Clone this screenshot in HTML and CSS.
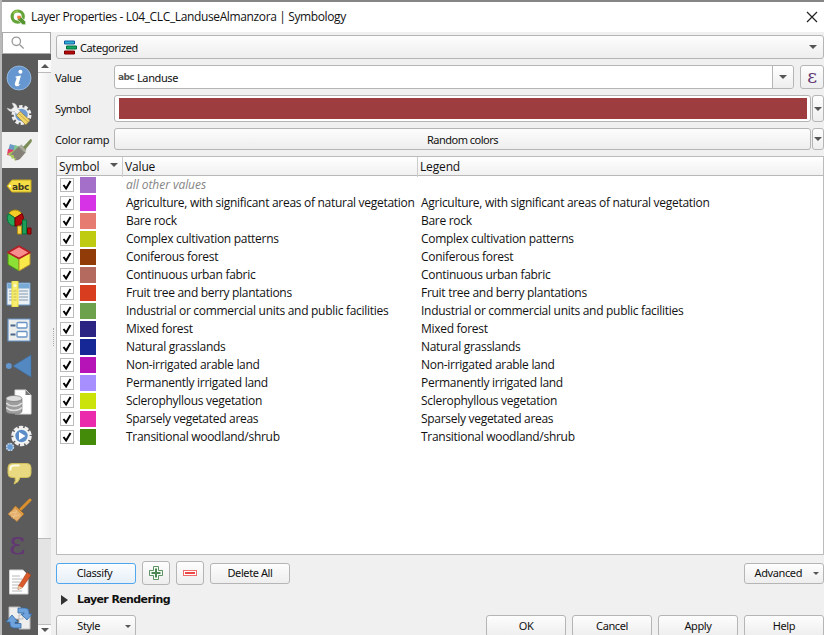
FILE: index.html
```html
<!DOCTYPE html>
<html lang="en">
<head>
<meta charset="utf-8">
<title>Layer Properties</title>
<link rel="stylesheet" href="styles.css">
</head>
<body>
<div class="window">
  <header class="titlebar">
    <svg class="logo" width="17" height="17" viewBox="0 0 17 17"><circle cx="7.7" cy="7.6" r="5.6" fill="none" stroke="#63a338" stroke-width="3.2"/><path d="M7.500 7.500h3.200l5 5.200v3h-3.200l-5-5z" fill="#55942f" stroke="#fff" stroke-width=".6"/><path d="M7.300 6.800h3.500v2l-1.600 1.700-1.900-1.600z" fill="#ee7a3c"/><path d="M3.200 4.500a5.400 5.400 0 0 1 5-2.500" fill="none" stroke="#9bc94b" stroke-width="1.500"/></svg>
    <h1>Layer Properties - L04_CLC_LanduseAlmanzora | Symbology</h1>
    <svg class="close" width="12" height="12" viewBox="0 0 12 12"><path d="M1 1l10 10M11 1L1 11" stroke="#222" stroke-width="1.200"/></svg>
  </header>
  <div class="body">
    <aside class="sidebar">
      <div class="search"><svg width="14" height="14" viewBox="0 0 14 14" fill="none" stroke="#9a9a9a" stroke-width="1.300"><circle cx="5.300" cy="5.300" r="4.200"/><path d="M8.500 8.500l4.200 4"/></svg></div>
      <div class="side-row">
        <nav class="tools">
          <span class="tool"><svg viewBox="0 0 26 26"><circle cx="13" cy="13" r="12" fill="#6697d0" stroke="#a0c3e6" stroke-width=".8"/><circle cx="14.400" cy="6.700" r="2" fill="#fff"/><path d="M9.500 11.400l5.500-.9-2.400 8.200q-.4 1.400 2.300-.3-2 3-4.400 2.800-2.400-.4-1.400-3.400l1.400-4.400q.3-1.100-1-.9z" fill="#fff"/></svg></span>
          <span class="tool"><svg viewBox="0 0 26 26"><circle cx="15.500" cy="14" r="8.500" fill="none" stroke="#ededed" stroke-width="3" stroke-dasharray="3.400 1.940"/><circle cx="15.500" cy="14" r="7" fill="#6f9bd0" stroke="#eee" stroke-width="1.500"/><path d="M6 2q5 0 5.400 5.500l5 5-3 3.200-5-5.200Q3 11.500 1 7l4 1.500 3-2.500z" fill="#f0f0f0" stroke="#bbb" stroke-width=".5"/><path d="M10.500 14.500l3.500-4 10 8.800-4.200 4.700z" fill="#f1d568" stroke="#8b773a" stroke-width=".7"/><path d="M12.500 12.500l9.500 8.500" stroke="#c9a947" stroke-width="1"/></svg></span>
          <span class="tool selected"><svg viewBox="0 0 26 26"><path d="M4 7l6.500 2-3.500 6-5-1z" fill="#6b9ac6"/><path d="M2 12l6 1-2 6-5-1z" fill="#e73866"/><path d="M9 8l8 3-5 5-5-1z" fill="#81c98d"/><path d="M1 17l8-4 3 8-3 3q-1-4-3-2-1-4-5-5z" fill="#a9c95a"/><path d="M8 14l5-5 7 6-6 7q-3 2-5 1 2-3-1-2 1-4-4-3z" fill="#858078"/><path d="M12.500 9.500l3-2 5 5-2 3z" fill="#a7a99a"/><path d="M17 10l7.500-8q2 0 1 3l-6 7.500z" fill="#7c8c57"/></svg></span>
          <span class="tool"><svg viewBox="0 0 26 26"><path d="M1 13l5-6h19v12H6z" fill="#f5dd45" stroke="#c9ab1f"/><circle cx="4" cy="13" r="1" fill="#fff"/><text x="6" y="16.600" class="tag-text">abc</text></svg></span>
          <span class="tool"><svg viewBox="0 0 26 26"><path d="M9 9L2.500 4.500A8 8 0 0 1 16 5z" fill="#f5cb28" stroke="#ab8c0a"/><path d="M9 9L2.500 4.500A8 8 0 0 0 9 17z" fill="#23aa5c" stroke="#07713a"/><path d="M9 9l7-4.500A8 8 0 0 1 9 17z" fill="#b30b0b" stroke="#710000"/><path d="M11.500 17h4v8h-4z" fill="#f8d44a" stroke="#b08b12"/><path d="M16.500 11h4v14h-4z" fill="#1e9c58" stroke="#07713a"/><path d="M21.500 19h3.500v6h-3.500z" fill="#b30b0b" stroke="#710000"/></svg></span>
          <span class="tool"><svg viewBox="0 0 26 26" stroke-linejoin="round"><path d="M2 7.500l11 6V26L2 19.500z" fill="#8bdf35" stroke="#4a9614"/><path d="M24 7.500l-11 6V26l11-6.500z" fill="#f8e849" stroke="#b9972b"/><path d="M13 1.200L24 7.500l-11 6-11-6z" fill="#f78d8d" stroke="#b71d24" stroke-width="1.600"/></svg></span>
          <span class="tool"><svg viewBox="0 0 26 26"><path d="M1 2h23v22H1z" fill="#edf1f4" stroke="#6a99c9"/><path d="M1.500 2.500h22v5h-22z" fill="#79a9d5"/><path d="M3 10h4M13 10h9M3 13h4M13 13h9M3 16h4M13 16h9M3 19h4M13 19h9" stroke="#8099ae"/><path d="M6 0h6v26H6z" fill="#f7ed70" stroke="#e9dd3e"/><circle cx="9" cy="4.500" r="1.600" fill="#fffbd0"/><path d="M7.500 10h3M7.500 13h3M7.500 16h3M7.500 19h3" stroke="#c2bb56"/></svg></span>
          <span class="tool"><svg viewBox="0 0 26 26"><path d="M2 2h22v22H2z" fill="#eceded" stroke="#6594c6" stroke-width="1.200"/><path d="M4.500 8.500h5M4.500 17.500h5" stroke="#496887" stroke-width="2"/><rect x="11" y="5.500" width="10" height="5.500" rx="1" fill="#fff" stroke="#6895c5" stroke-width="1.300"/><rect x="11" y="14.500" width="10" height="5.500" rx="1" fill="#fff" stroke="#6895c5" stroke-width="1.300"/></svg></span>
          <span class="tool"><svg viewBox="0 0 26 26"><circle cx="2.800" cy="13" r="3" fill="#6396ce"/><path d="M7 13L25 2v22z" fill="#5389c0" stroke="#3b71a8" stroke-width=".6"/></svg></span>
          <span class="tool"><svg viewBox="0 0 26 26"><path d="M9 1h11l5 5v19H9z" fill="#fff" stroke="#ddd"/><path d="M19.500 1l5.500 5h-5.500z" fill="#777"/><path d="M0 10v12q0 3 8 3t8-3V10z" fill="#9d9d9d" stroke="#6d6d6d" stroke-width=".6"/><path d="M0 14q3 3 8 3t8-3M0 18.500q3 3 8 3t8-3" fill="none" stroke="#ddd" stroke-width="1.400"/><ellipse cx="8" cy="9.500" rx="8" ry="3" fill="#dedede" stroke="#777" stroke-width=".7"/></svg></span>
          <span class="tool"><svg viewBox="0 0 26 26"><circle cx="15.500" cy="11" r="8.800" fill="none" stroke="#eee" stroke-width="3" stroke-dasharray="4.200 1.330"/><circle cx="15.500" cy="11" r="7.200" fill="#5b8ec8" stroke="#f4f4f4" stroke-width="2"/><path d="M13 7l6.500 4-6.500 4z" fill="#fff"/><circle cx="4" cy="22" r="3.500" fill="#679bd3" stroke="#bed1e4" stroke-width="1.500" stroke-dasharray="2 .7"/></svg></span>
          <span class="tool"><svg viewBox="0 0 26 26"><path d="M6 2.500h15q4 0 4 4v6q0 4-4 4h-7q-1 5-6 6.500 2-3.500 1-6.500H6q-4 0-4-4v-6q0-4 4-4z" fill="#e9da82" stroke="#cdbd5e"/><path d="M4.500 9.500v-2q0-3 4-3h5" stroke="#fffbe0" stroke-width="2" fill="none"/></svg></span>
          <span class="tool"><svg viewBox="0 0 26 26"><path d="M15 12l9-9" stroke="#d98f2c" stroke-width="3" stroke-linecap="round"/><path d="M9.500 9l8.500 8-2.500 2.500L7 11.500z" fill="#f3ac4b" stroke="#a76617" stroke-width=".7"/><path d="M9 10.500l7.500 7.500-5.500 6.500-9-7.500z" fill="#e4b06d" stroke="#b87830" stroke-width=".7"/><path d="M4 16l7-1M5 20l8-2M7 22l4-9" stroke="#f0c993" stroke-width=".7"/></svg></span>
          <span class="tool eps">ε</span>
          <span class="tool"><svg viewBox="0 0 26 26"><path d="M3.500 1H17l5 5v19H3.500z" fill="#fff" stroke="#d1d1d1"/><path d="M6 7h8M6 10h10M6 13h8M6 16h10M6 19h8M6 22h10" stroke="#b8b8b8"/><path d="M12.500 17L21 3.500l4 2.500-8.500 12.500-4.500 2z" fill="#da5a2b" stroke="#a33c15" stroke-width=".6"/><path d="M12.500 17l4 1.500-4.500 2z" fill="#f1d3a7"/></svg></span>
          <span class="tool"><svg viewBox="0 0 26 26"><path d="M3 2h11l3 3v9H3zM13 10h11v14H13z" fill="#eee" stroke="#bbb"/><path d="M12 3h7q4 0 4 4v2h3l-5 6-6-6h3V8h-6z" fill="#71a4dc" stroke="#326da9" stroke-width=".8"/><path d="M15 23H8q-4 0-4-4v-2H0l6-7 6 7H9v1.500h6z" fill="#71a4dc" stroke="#326da9" stroke-width=".8"/></svg></span>
        </nav>
        <div class="scrollbar"><span class="sb-btn"><i class="arrow up"></i></span><span class="sb-track"></span><span class="sb-thumb"></span><span class="sb-btn bottom"><i class="arrow"></i></span></div>
      </div>
    </aside>
    <i class="grip"></i>
    <main>
      <div class="control renderer"><svg width="14" height="15" viewBox="0 0 14 15"><path d="M1.500 1h10v3h-10z" fill="#2fb3d1" stroke="#1458a0"/><path d="M3.500 6h10v3h-10z" fill="#13ab62" stroke="#046a38"/><path d="M1.500 11h10v3h-10z" fill="#ba0909" stroke="#790000"/></svg><span>Categorized</span><i class="arrow"></i></div>
      <div class="field value-row"><label>Value</label><div class="control input"><span class="abc">abc</span><span>Landuse</span><span class="drop"><i class="arrow"></i></span></div><span class="control eps-btn">ε</span></div>
      <div class="field symbol-row"><label>Symbol</label><div class="control swatch"><i></i></div><span class="control narrow"><i class="arrow"></i></span></div>
      <div class="field ramp-row"><label>Color ramp</label><div class="control ramp"><span>Random colors</span></div><span class="control narrow"><i class="arrow"></i></span></div>
      <section class="table">
        <div class="thead"><span class="th-sym">Symbol<i class="arrow"></i></span><span>Value</span><span>Legend</span></div>
        <div class="rows" id="rows"></div>
      </section>
      <div class="actions"><span class="control btn default">Classify</span><span class="control icon-btn"><svg width="16" height="16" viewBox="0 0 16 16"><path d="M5.500 1.500h5v4h4v5h-4v4h-5v-4h-4v-5h4z" fill="#f4faf4" stroke="#5d9262"/><path d="M8 3.500v9M3.500 8h9" stroke="#4b8652" stroke-width="2"/></svg></span><span class="control icon-btn"><svg width="16" height="16" viewBox="0 0 16 16"><rect x="1.500" y="5.500" width="13" height="5" fill="#fff" stroke="#ef6c6c"/><path d="M3 8h10" stroke="#ee4545" stroke-width="2"/></svg></span><span class="control btn">Delete All</span><span class="control btn menu push">Advanced<i class="arrow small"></i></span></div>
      <div class="group"><i></i><strong>Layer Rendering</strong></div>
      <footer><span class="control btn menu style">Style<i class="arrow small"></i></span><span class="control btn push">OK</span><span class="control btn">Cancel</span><span class="control btn">Apply</span><span class="control btn">Help</span></footer>
    </main>
  </div>
</div>
<script src="rows.js"></script>
</body>
</html>
```
FILE: styles.css
```css
* { box-sizing: border-box; }
body { margin: 0; width: 824px; height: 635px; overflow: hidden; background: #b9b9b9; font: 11px/14px "Noto Sans", sans-serif; letter-spacing: -.4px; color: #111; }
.window { height: 635px; margin-left: 2px; border-top: 2px solid #858585; background: #f0f0f0; display: flex; flex-direction: column; }
.titlebar { height: 30px; flex: none; background: #fff; display: flex; align-items: center; padding: 0 6px 0 8px; }
.titlebar h1 { font: 12px/16px "Open Sans", sans-serif; letter-spacing: -.37px; margin: 0 auto 0 4px; white-space: nowrap; }
.body { flex: 1; display: flex; min-height: 0; }
.sidebar { width: 49px; flex: none; background: #5b5b5b; display: flex; flex-direction: column; }
.search { height: 22px; flex: none; background: #fff; border: 1px solid #aaa; padding: 3px 0 0 8px; }
.side-row { display: flex; flex: 1; min-height: 0; }
.tools { width: 36px; padding-top: 6px; flex: none; overflow: hidden; }
.tool { display: flex; width: 36px; height: 36px; align-items: center; padding-left: 4px; }
.tool svg { width: 26px; height: 26px; display: block; }
.tool.selected { background: #f0f0f0; }
.tag-text { font: bold 9px "DejaVu Sans", sans-serif; fill: #3e3820; letter-spacing: -.3px; }
.tool.eps { font: 32px/30px "DejaVu Serif", serif; color: #623872; padding: 0 0 7px 7px; }
.scrollbar { width: 13px; margin-top: 6px; display: flex; flex-direction: column; background: #f6f6f6; }
.sb-btn { height: 13px; background: #fbfbfb; border-bottom: 1px solid #bbb; display: grid; place-items: center; }
.sb-track { flex: 1; background: linear-gradient(90deg, #fff, #eee); }
.sb-thumb { height: 87px; background: #e4e4e4; border: solid #bbb; border-width: 1px 0; }
.sb-btn.bottom { height: 10px; border: 0; }
.arrow { width: 0; height: 0; border: 4px solid transparent; border-top-color: #555; border-bottom: 0; flex: none; }
.arrow.up { border-top: 0; border-bottom: 4px solid #555; }
.arrow.small { border-width: 3px 3px 0; }
.grip { width: 2px; height: 18px; margin: 296px 0 0 2px; border-left: 1px dotted #aaa; flex: none; }
main { flex: 1; min-width: 0; padding: 3px 0 0 1px; display: flex; flex-direction: column; }
.control { border: 1px solid #b5b5b5; border-radius: 3px; background: linear-gradient(#fdfdfd, #eeeeee); display: flex; align-items: center; white-space: nowrap; }
.renderer { height: 24px; flex: none; padding: 2px 6px 0; gap: 3px; }
.renderer svg { margin-bottom: 2px; }
.renderer .arrow { margin: 0 0 2px auto; }
.field { display: flex; align-items: center; flex: none; }
.field label { width: 58px; margin: 1px 1px 0 -1px; white-space: nowrap; flex: none; }
.value-row { height: 24px; margin-top: 6px; }
.input { width: 680px; height: 24px; background: #fff; padding-left: 3px; }
.input span { margin-top: 1px; }
.input .abc { font: bold 9px/10px "DejaVu Sans", sans-serif; color: #555; letter-spacing: -.6px; width: 19px; margin-top: -1px; }
.input .drop { margin: 0 0 0 auto; width: 21px; height: 22px; border-left: 1px solid #b5b5b5; display: grid; place-items: center; background: linear-gradient(#fff, #eee); border-radius: 0 3px 3px 0; }
.eps-btn { margin-left: 6px; width: 24px; height: 24px; justify-content: center; font: 19px/20px "DejaVu Serif", serif; color: #623872; padding-bottom: 3px; }
.symbol-row { height: 27px; margin-top: 6px; }
.symbol-row label { margin-top: 0; }
.swatch { flex: 1; height: 27px; padding: 2px 3px 2px 4px; background: #fff; }
.swatch i { flex: 1; height: 21px; background: #9d3d40; }
.narrow { width: 12px; height: 100%; margin-left: 1px; justify-content: center; }
.ramp-row { height: 22px; margin-top: 6px; }
.ramp { flex: 1; height: 22px; justify-content: center; padding-top: 2px; letter-spacing: -.5px; }
.table { height: 399px; margin-top: 6px; background: #fff; border: 1px solid #bbb; flex: none; font: 12px/18px "Open Sans", sans-serif; letter-spacing: -.29px; }
.thead { height: 19px; display: grid; grid-template-columns: 66px 295px 1fr; background: linear-gradient(#fff, #f1f1f1); border-bottom: 1px solid #b8b8b8; letter-spacing: -.15px; }
.thead span { padding-left: 2px; border-right: 1px solid #ccc; line-height: 20px; }
.thead span:last-child { border: 0; }
.th-sym { display: flex; justify-content: space-between; padding-right: 4px; }
.th-sym .arrow { margin-top: 6px; }
.row { height: 18px; display: grid; grid-template-columns: 14px 16px 295px 1fr; padding-left: 3px; white-space: nowrap; }
.row .check { width: 14px; height: 14px; margin-top: 2px; border: 1px solid #bbb; background: #fff; }
.check svg { display: block; width: 12px; height: 12px; }
.row .color { width: 16px; height: 16px; margin: 1px 0 0 6px; }
.row .val, .row .leg { padding-left: 36px; line-height: 17px; }
.row.other .val { font-style: italic; color: #858585; letter-spacing: -.05px; }
.actions { display: flex; align-items: center; height: 24px; margin-top: 6px; gap: 6px; flex: none; }
.btn { width: 80px; height: 21px; justify-content: center; }
.icon-btn { width: 28px; height: 24px; justify-content: center; }
.default { border-color: #51a7ed; background: linear-gradient(#fbfdff, #e6eff7); padding-right: 3px; }
.push { margin-left: auto; }
.menu { justify-content: flex-end; gap: 11px; padding-right: 4px; }
.style { gap: 25px; }
.group { height: 29px; flex: none; display: flex; align-items: center; padding: 1px 0 0 5px; }
.group i { border: solid transparent; border-width: 5px 0 5px 7px; border-left-color: #333; margin: 0 9px 0 0; }
.group strong { font: bold 11px/14px "DejaVu Sans", sans-serif; letter-spacing: -.6px; }
footer { display: flex; gap: 6px; margin-top: 1px; flex: none; }
footer .btn { height: 22px; }
```
FILE: rows.js
```js
const categories = [
  ["all other values", "#a36fc9", ""],
  ["Agriculture, with significant areas of natural vegetation", "#d633e6"],
  ["Bare rock", "#e67b72"],
  ["Complex cultivation patterns", "#becb10"],
  ["Coniferous forest", "#903b08"],
  ["Continuous urban fabric", "#b56a60"],
  ["Fruit tree and berry plantations", "#d83d20"],
  ["Industrial or commercial units and public facilities", "#6ea14b"],
  ["Mixed forest", "#2b2483"],
  ["Natural grasslands", "#162796"],
  ["Non-irrigated arable land", "#b714b8"],
  ["Permanently irrigated land", "#a78fff"],
  ["Sclerophyllous vegetation", "#cbe30a"],
  ["Sparsely vegetated areas", "#e92bac"],
  ["Transitional woodland/shrub", "#438b09"]
];
document.getElementById("rows").innerHTML = categories.map(([name, color, legend = name], i) =>
  `<div class="row${i ? "" : " other"}"><span class="check"><svg viewBox="0 0 12 12"><path d="M2.500 6l2.600 3.500L9.500 2" fill="none" stroke="#000" stroke-width="2"/></svg></span><span class="color" style="background:${color}"></span><span class="val">${name}</span><span class="leg">${legend}</span></div>`
).join("");
```
